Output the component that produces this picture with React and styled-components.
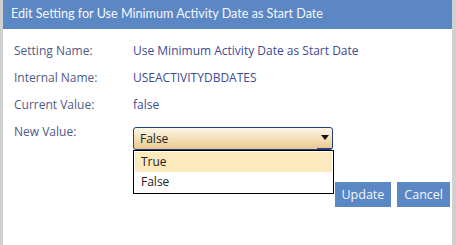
import React, { useState } from "react";
import styled, { createGlobalStyle } from "styled-components";

const GlobalStyle = createGlobalStyle`
  html, body {
    margin: 0;
    padding: 0;
    background: #d0d0d0;
    font-family: "Open Sans", "Noto Sans", sans-serif;
  }
`;

export default function App() {
  const [valor, setValor] = useState("False");
  const campos = [
    { label: "Setting Name:", value: "Use Minimum Activity Date as Start Date" },
    { label: "Internal Name:", value: "USEACTIVITYDBDATES" },
    { label: "Current Value:", value: "false" },
  ];
  return (
    <Page>
      <GlobalStyle />
      <Dialog>
        <TitleBar>Edit Setting for Use Minimum Activity Date as Start Date</TitleBar>
        <Body>
          {campos.map((c) => (
            <FieldRow key={c.label}>
              <Label>{c.label}</Label>
              <Value>{c.value}</Value>
            </FieldRow>
          ))}
          <SelectRow>
            <Label>New Value:</Label>
            <SelectWrap>
              <SelectBox>
                <span>{valor}</span>
                <ArrowButton>
                  <svg width="8" height="5" viewBox="0 0 8 5">
                    <path d="M0 0 H8 L4 5 Z" fill="#111" />
                  </svg>
                </ArrowButton>
              </SelectBox>
              <OptionList>
                {["True", "False"].map((o) => (
                  <Option key={o} active={o === "True"} onClick={() => setValor(o)}>
                    {o}
                  </Option>
                ))}
              </OptionList>
            </SelectWrap>
          </SelectRow>
          <ButtonBar>
            <Button>Update</Button>
            <Button>Cancel</Button>
          </ButtonBar>
        </Body>
      </Dialog>
    </Page>
  );
}

const Page = styled.div`
  width: 456px;
  height: 245px;
  overflow: hidden;
`;
const Dialog = styled.div`
  margin: 0 4px 0 3px;
  height: 245px;
  background: #ffffff;
`;
const TitleBar = styled.div`
  height: 29px;
  line-height: 28px;
  background: #5b87c5;
  color: #f4f7fc;
  font-family: Lato, "Open Sans", sans-serif;
  font-size: 12.6px;
  padding-left: 8px;
  white-space: nowrap;
`;
const Body = styled.div`
  padding: 8px 2px 0 11px;
`;
const FieldRow = styled.div`
  display: grid;
  grid-template-columns: 119px 1fr;
  height: 27px;
  align-items: center;
  font-size: 12px;
`;
const Label = styled.div`
  color: #4e5a86;
  font-size: 12px;
`;
const Value = styled.div`
  color: #3e4a92;
`;
const SelectRow = styled.div`
  display: grid;
  grid-template-columns: 119px 200px;
  align-items: start;
  padding-top: 2px;
  ${Label} {
    line-height: 20px;
    padding-top: 2px;
  }
`;
const SelectWrap = styled.div`
  position: relative;
  margin-top: 7px;
`;
const SelectBox = styled.div`
  height: 21px;
  border: 1px solid #22408a;
  border-radius: 3px;
  background: linear-gradient(#fdf6e9, #f3deb4 55%, #e8c98c);
  display: flex;
  align-items: center;
  justify-content: space-between;
  padding-left: 6px;
  font-size: 12px;
  color: #222;
`;
const ArrowButton = styled.div`
  width: 15px;
  height: 21px;
  display: flex;
  align-items: center;
  justify-content: center;
  border-bottom: 1px solid #22408a;
  box-sizing: border-box;
  padding-bottom: 2px;
`;
const OptionList = styled.div`
  position: absolute;
  top: 23px;
  left: 0;
  width: 201px;
  box-sizing: border-box;
  border: 1px solid #000;
  background: #fff;
  padding: 1px;
`;
const Option = styled.div`
  height: 20px;
  line-height: 20px;
  padding-left: 6px;
  font-size: 12px;
  color: #222;
  background: ${(p) => (p.active ? "#fce9bc" : "#fff")};
`;
const ButtonBar = styled.div`
  display: flex;
  justify-content: flex-end;
  gap: 6px;
  margin-top: 32px;
`;
const Button = styled.div`
  height: 25px;
  line-height: 25px;
  padding: 0 7px;
  background: #5b87c5;
  color: #f4f7fc;
  font-size: 12.5px;
`;
